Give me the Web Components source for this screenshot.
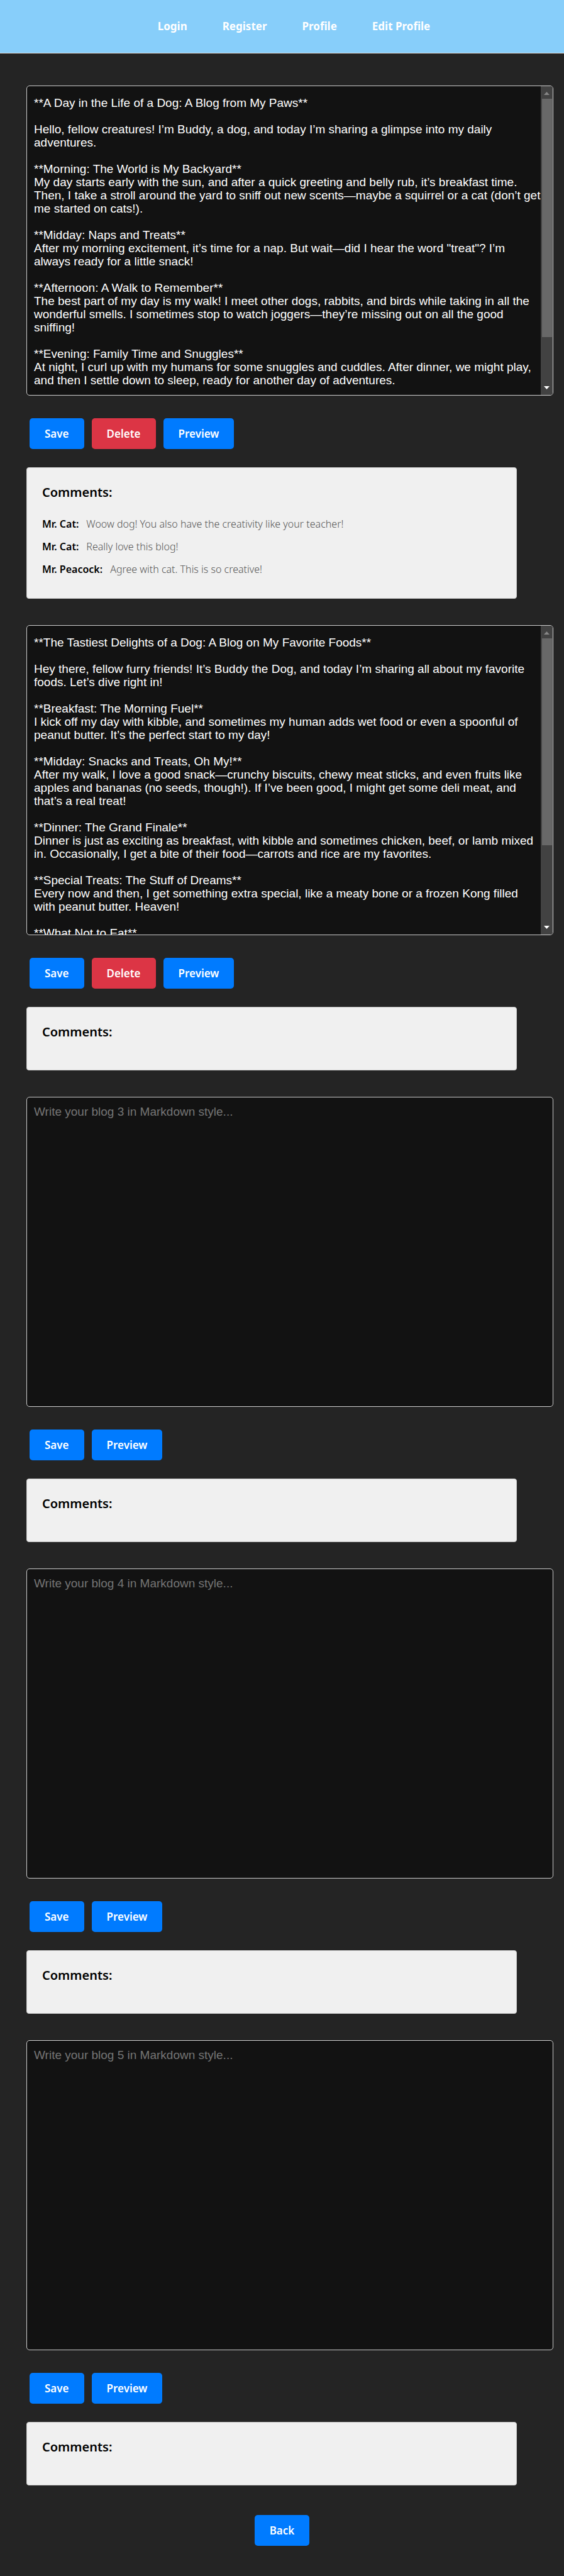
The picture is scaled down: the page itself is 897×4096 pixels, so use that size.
<!DOCTYPE html>
<html lang="en">
<head>
<meta charset="utf-8">
<meta name="viewport" content="width=device-width, initial-scale=1">
<title>Edit Blogs</title>
<style>
  body {
    margin: 0;
    background: #242424;
    color: #fff;
    font-family: "Noto Sans", "Open Sans", sans-serif;
  }
</style>
</head>
<body>
<blog-page></blog-page>

<template id="blog-page">
  <style>
    :host { display: block; }
    main { padding: 51px 17px 48px 42px; display: flex; flex-direction: column; gap: 42px; }
    footer { display: flex; justify-content: center; margin: 5px 25px 0 0; }
  </style>
  <site-nav></site-nav>
  <main>
    <blog-entry number="1" saved thumb="84">
      <blog-text slot="text">**A Day in the Life of a Dog: A Blog from My Paws**

Hello, fellow creatures! I’m Buddy, a dog, and today I’m sharing a glimpse into my daily adventures.

**Morning: The World is My Backyard**
My day starts early with the sun, and after a quick greeting and belly rub, it’s breakfast time. Then, I take a stroll around the yard to sniff out new scents—maybe a squirrel or a cat (don’t get me started on cats!).

**Midday: Naps and Treats**
After my morning excitement, it’s time for a nap. But wait—did I hear the word "treat"? I’m always ready for a little snack!

**Afternoon: A Walk to Remember**
The best part of my day is my walk! I meet other dogs, rabbits, and birds while taking in all the wonderful smells. I sometimes stop to watch joggers—they’re missing out on all the good sniffing!

**Evening: Family Time and Snuggles**
At night, I curl up with my humans for some snuggles and cuddles. After dinner, we might play, and then I settle down to sleep, ready for another day of adventures.</blog-text>
      <blog-comment author="Mr. Cat">Woow dog! You also have the creativity like your teacher!</blog-comment>
      <blog-comment author="Mr. Cat">Really love this blog!</blog-comment>
      <blog-comment author="Mr. Peacock">Agree with cat. This is so creative!</blog-comment>
    </blog-entry>
    <blog-entry number="2" saved thumb="73">
      <blog-text slot="text">**The Tastiest Delights of a Dog: A Blog on My Favorite Foods**

Hey there, fellow furry friends! It’s Buddy the Dog, and today I’m sharing all about my favorite foods. Let’s dive right in!

**Breakfast: The Morning Fuel**
I kick off my day with kibble, and sometimes my human adds wet food or even a spoonful of peanut butter. It’s the perfect start to my day!

**Midday: Snacks and Treats, Oh My!**
After my walk, I love a good snack—crunchy biscuits, chewy meat sticks, and even fruits like apples and bananas (no seeds, though!). If I’ve been good, I might get some deli meat, and that’s a real treat!

**Dinner: The Grand Finale**
Dinner is just as exciting as breakfast, with kibble and sometimes chicken, beef, or lamb mixed in. Occasionally, I get a bite of their food—carrots and rice are my favorites.

**Special Treats: The Stuff of Dreams**
Every now and then, I get something extra special, like a meaty bone or a frozen Kong filled with peanut butter. Heaven!

**What Not to Eat**</blog-text>
    </blog-entry>
    <blog-entry number="3"></blog-entry>
    <blog-entry number="4"></blog-entry>
    <blog-entry number="5"></blog-entry>
    <footer><action-button>Back</action-button></footer>
  </main>
</template>

<template id="site-nav">
  <style>
    :host { display: block; background: #87cefa; border-bottom: 1px solid #ddd; }
    ul {
      display: flex; justify-content: center; align-items: center; gap: 56px;
      height: 84px; margin: 0; padding: 0 0 0 38px; list-style: none;
    }
    a { color: #fff; font-size: 17px; line-height: 24px; font-weight: 700; text-decoration: none; }
  </style>
  <nav><ul>
    <li><a href="#login">Login</a></li>
    <li><a href="#register">Register</a></li>
    <li><a href="#profile">Profile</a></li>
    <li><a href="#edit-profile">Edit Profile</a></li>
  </ul></nav>
</template>

<template id="action-button">
  <style>
    :host { display: block; }
    button {
      display: block; height: 49px; padding: 0 24px; border: 0; border-radius: 5px;
      background: #007bff; color: #fff; font: inherit; font-size: 17px; line-height: 24px;
      font-weight: 600; cursor: pointer;
    }
    :host([danger]) button { background: #dc3545; }
  </style>
  <button type="button"><slot></slot></button>
</template>

<template id="markdown-editor">
  <style>
    :host {
      display: flex; height: 491px; overflow: hidden;
      border: 1px solid #ccc; border-radius: 5px; background: #121212;
    }
    textarea {
      flex: 1; min-width: 0; box-sizing: border-box; margin: 0; padding: 16px 0 0 11px;
      border: 0; outline: 0; resize: none; background: none; color: #fff;
      font: 19px/21px "Liberation Sans", Arial, sans-serif; scrollbar-width: none;
    }
    textarea:placeholder-shown { padding-top: 12px; }
    textarea::placeholder { color: #757575; }
    .bar {
      flex: none; width: 19px; display: grid; grid-template-rows: 20px 1fr 20px;
      justify-items: center; background: #424242;
    }
    .bar[hidden] { display: none; }
    .thumb { width: 16px; background: #686868; }
    svg { display: block; width: 19px; height: 20px; }
  </style>
  <textarea></textarea>
  <div class="bar" aria-hidden="true" hidden>
    <svg viewBox="0 0 19 20"><path d="M5 14h9l-4.500-5z" fill="#868686"/></svg>
    <div class="thumb"></div>
    <svg viewBox="0 0 19 20"><path d="M5 6h9l-4.500 5z" fill="#fff"/></svg>
  </div>
</template>

<template id="blog-comment">
  <style>
    :host { display: flex; gap: 12px; font-size: 16px; line-height: 24px; margin-bottom: 12px; }
    strong { color: #000; font-weight: 600; white-space: nowrap; }
    span { color: #555; font-weight: 300; }
  </style>
  <strong></strong><span><slot></slot></span>
</template>

<template id="comment-panel">
  <style>
    :host {
      display: block; padding: 24px 24px 22px; border: 1px solid #ccc; border-radius: 4px;
      background: #f0f0f0; color: #000;
    }
    h3 { margin: 0 0 23px; font-size: 20px; line-height: 30px; font-weight: 600; }
  </style>
  <h3>Comments:</h3>
  <slot></slot>
</template>

<template id="blog-entry">
  <style>
    :host { display: block; }
    .actions { display: flex; gap: 12px; margin: 36px 0 29px 5px; }
    comment-panel { margin-right: 58px; }
    slot[name="text"] { display: none; }
  </style>
  <slot name="text"></slot>
  <markdown-editor></markdown-editor>
  <div class="actions">
    <action-button>Save</action-button>
    <action-button class="delete" danger>Delete</action-button>
    <action-button>Preview</action-button>
  </div>
  <comment-panel><slot></slot></comment-panel>
</template>

<script>
class Base extends HTMLElement {
  constructor() {
    super();
    const tpl = document.getElementById(this.localName);
    this.attachShadow({ mode: 'open' });
    if (tpl) this.shadowRoot.append(tpl.content.cloneNode(true));
  }
  $(selector) { return this.shadowRoot.querySelector(selector); }
}

class MarkdownEditor extends Base {
  setup(number, text, thumb) {
    const area = this.$('textarea');
    area.placeholder = `Write your blog ${number} in Markdown style...`;
    area.setAttribute('aria-label', `Blog ${number}`);
    area.defaultValue = text;
    if (thumb) {
      this.$('.bar').hidden = false;
      this.$('.thumb').style.height = thumb + '%';
    }
  }
}

class BlogComment extends Base {
  connectedCallback() { this.$('strong').textContent = this.getAttribute('author') + ':'; }
}

class BlogEntry extends Base {
  connectedCallback() {
    const source = this.querySelector('blog-text');
    this.$('markdown-editor').setup(
      this.getAttribute('number'), source ? source.textContent : '', this.getAttribute('thumb'));
    if (source) source.remove();
    if (!this.hasAttribute('saved')) this.$('.delete')?.remove();
  }
}

customElements.define('action-button', class extends Base {});
customElements.define('site-nav', class extends Base {});
customElements.define('comment-panel', class extends Base {});
customElements.define('markdown-editor', MarkdownEditor);
customElements.define('blog-comment', BlogComment);
customElements.define('blog-entry', BlogEntry);
customElements.define('blog-page', class extends Base {});
</script>
</body>
</html>
